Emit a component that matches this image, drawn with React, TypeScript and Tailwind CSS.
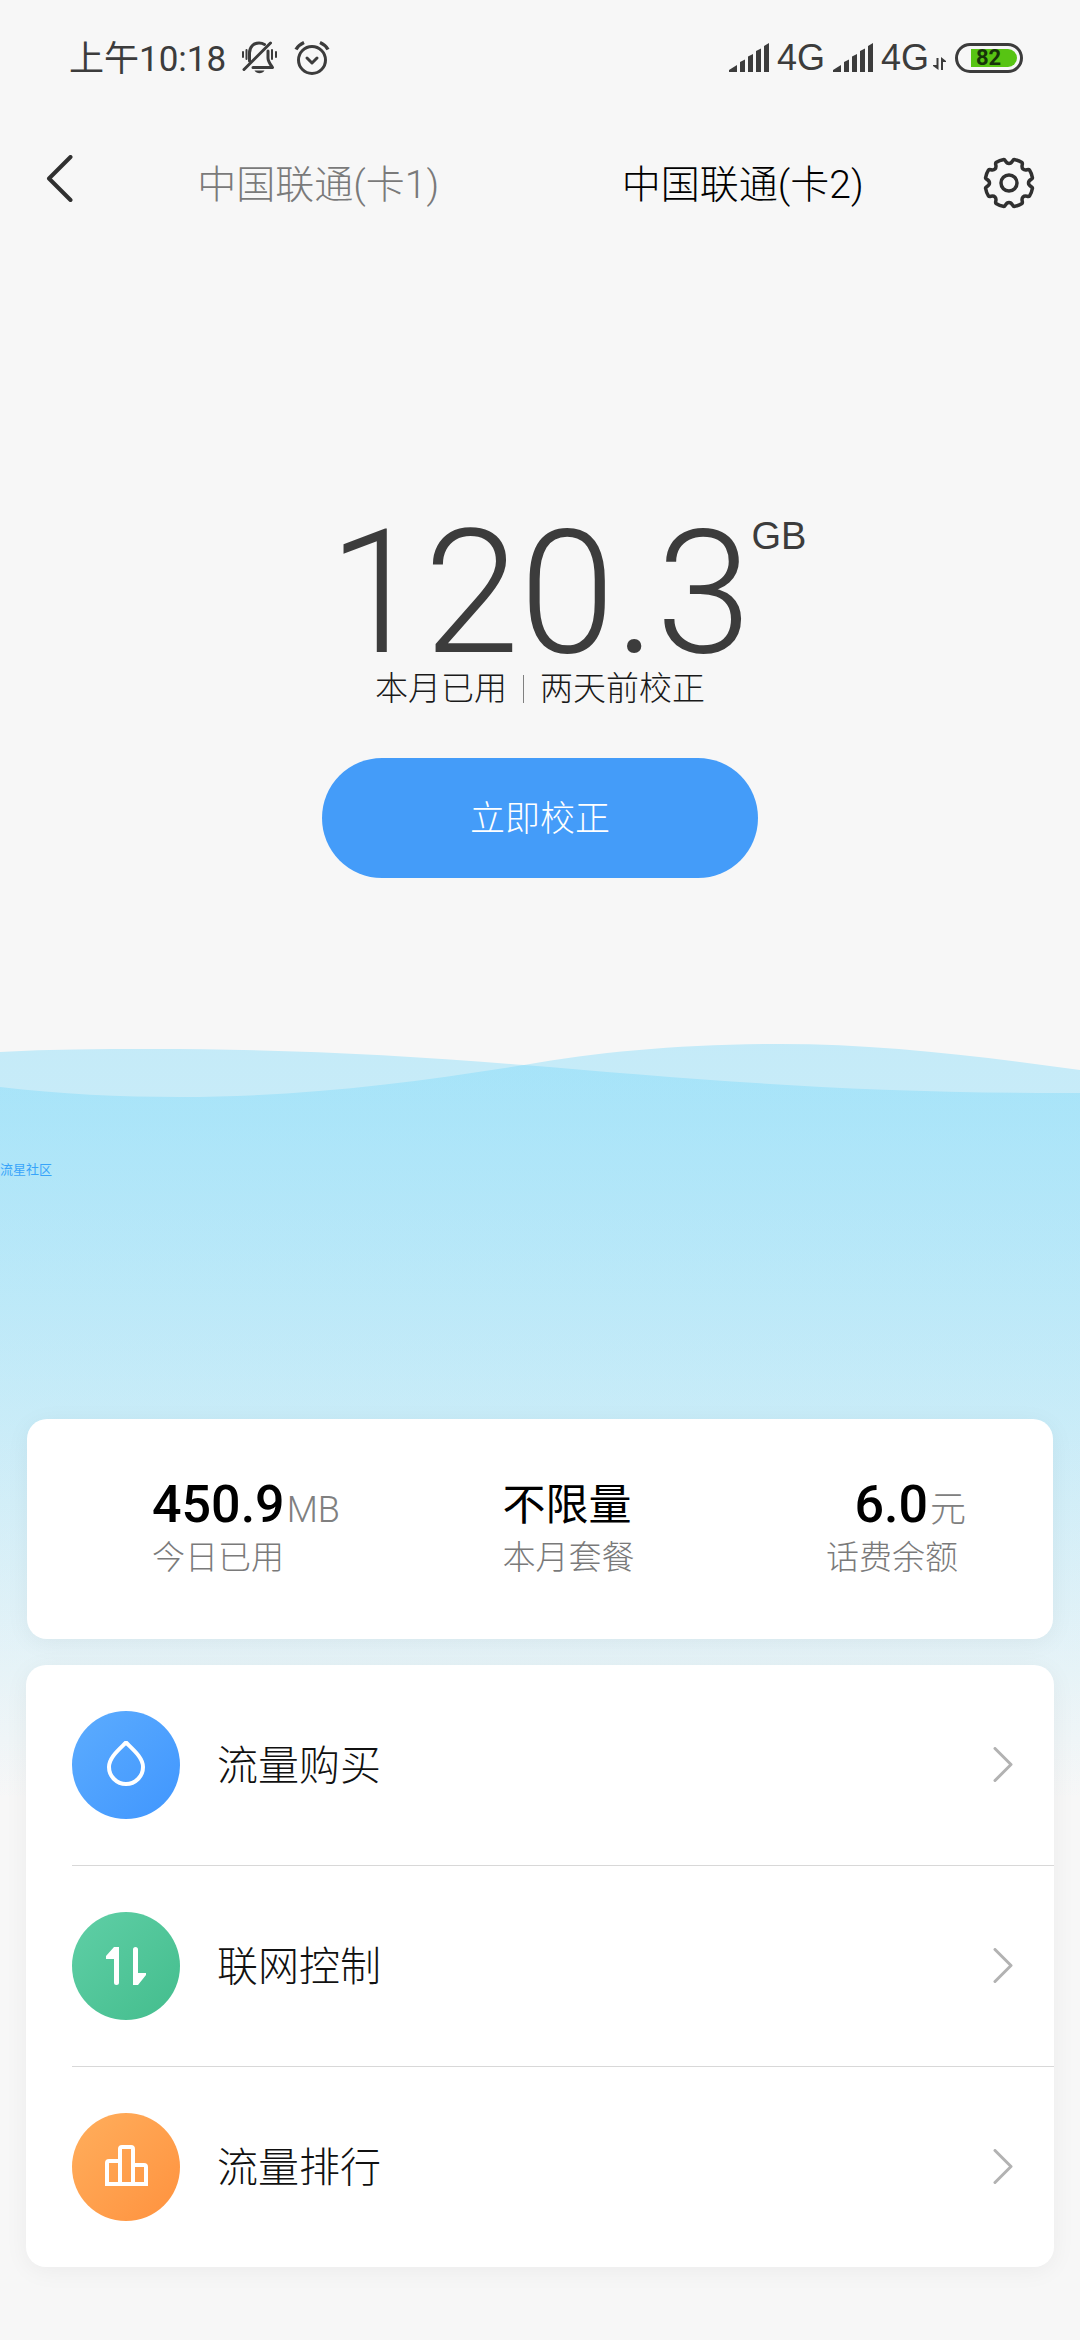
import React from 'react';

interface Stat {
    value: string;
    unit?: string;
    label: string;
}

interface MenuEntry {
    title: string;
    circle: string;
    icon: React.ReactNode;
}

const MutedBellIcon = () => (
    <svg width="36" height="34" viewBox="0 0 36 34" fill="none" stroke="#3c3c3c" strokeWidth="3" strokeLinecap="round">
        <path d="M7.500 20v-8C7.500 6 11.500 2 17 2c2.500 0 4 .5 5.500 1.500" />
        <path d="M26 10v7c0 3.500 2 6 4.500 9.500H11" strokeLinejoin="round" />
        <path d="M2 28.500 28.500 2" />
        <path d="M1 11v5M4.500 9v9M30 9v9M34 11v5" strokeWidth="2" />
        <path d="M12.500 29.500h10c-2 3.500-8 3.500-10 0z" fill="#3c3c3c" stroke="none" />
    </svg>
);

const AlarmIcon = () => (
    <svg width="36" height="36" viewBox="0 0 36 36" fill="none" stroke="#3c3c3c" strokeWidth="3" strokeLinecap="round" strokeLinejoin="round">
        <circle cx="18" cy="20" r="13.500" />
        <path d="m13 18 5 5 5-5" />
        <path d="M2 9.500C4 6 6.500 4 10 2.500M34 9.500C32 6 29.500 4 26 2.500" strokeLinecap="butt" strokeWidth="3.500" />
    </svg>
);

const SignalIcon = () => (
    <svg width="40" height="30" viewBox="0 0 40 30" fill="#3c3c3c">
        <path d="M0 29v-2l8-5v7zM11 29V19l5-2.500V29zM19 29V13.500l5-2.500v18zM27 29V8l5-2.500V29zM35 29V3l5-3v29z" />
    </svg>
);

const DataArrowsIcon = () => (
    <svg width="14" height="14" viewBox="0 0 14 14" fill="#3c3c3c">
        <path d="M3.500 1h2v12L0 9V8h3.500zM8 0l5 4v1h-3v8H8z" />
    </svg>
);

const GearIcon = () => (
    <svg width="52" height="52" viewBox="0 0 52 52" fill="none" stroke="#303030" strokeWidth="3.500" strokeLinejoin="round">
        <path d="M21 2.500c1.500 0 1.500 4 5 4s3.500-4 5-4c3 .5 6 1.700 8 3 1.500 1.500-1.500 4 1 6.500s5-.5 6.500 1c1.300 2 2.500 5 3 8 0 1.500-4 1.500-4 5s4 3.500 4 5c-.5 3-1.700 6-3 8-1.500 1.500-4-1.500-6.500 1s.5 5-1 6.500c-2 1.300-5 2.500-8 3-1.500 0-1.500-4-5-4s-3.500 4-5 4c-3-.5-6-1.700-8-3-1.500-1.500 1.500-4-1-6.500s-5 .5-6.500-1c-1.300-2-2.500-5-3-8 0-1.500 4-1.500 4-5s-4-3.500-4-5c.5-3 1.700-6 3-8 1.500-1.500 4 1.500 6.500-1s-.5-5 1-6.500c2-1.300 5-2.500 8-3z" />
        <circle cx="26" cy="26" r="8" />
    </svg>
);

const DropIcon = () => (
    <svg width="48" height="48" viewBox="0 0 48 48" fill="none" stroke="#fff" strokeWidth="4">
        <path d="M24 1.500C17 8.500 7 16.500 7 26a17 17 0 0 0 34 0C41 16.500 31 8.500 24 1.500z" />
    </svg>
);

const ArrowsIcon = () => (
    <svg width="48" height="48" viewBox="0 0 48 48" fill="#fff">
        <path d="M12 5h5v35.500a2.500 2.500 0 0 1-5 0V17H4v-3z" />
        <path d="M31 43V7.500a2.500 2.500 0 0 1 5 0V31h8v2l-8 10z" />
    </svg>
);

const RankIcon = () => (
    <svg width="48" height="48" viewBox="0 0 48 48" fill="none" stroke="#fff" strokeWidth="4">
        <path d="M18 41V6a2 2 0 0 1 2-2h9a2 2 0 0 1 2 2v35M18 18H7a2 2 0 0 0-2 2v21h39V24a2 2 0 0 0-2-2H31" />
    </svg>
);

const stats: Stat[] = [
    { value: '450.9', unit: 'MB', label: '今日已用' },
    { value: '不限量', label: '本月套餐' },
    { value: '6.0', unit: '元', label: '话费余额' }
];

const menu: MenuEntry[] = [
    { title: '流量购买', circle: 'from-[#5cacfe] to-[#4096fe]', icon: <DropIcon /> },
    { title: '联网控制', circle: 'from-[#5fcfa6] to-[#43bd8d]', icon: <ArrowsIcon /> },
    { title: '流量排行', circle: 'from-[#ffae5c] to-[#ff923e]', icon: <RankIcon /> }
];

const StatusBar = () => (
    <div className="flex h-[116px] items-center justify-between pr-[57px] pl-[69px] text-[#3c3c3c]">
        <div className="flex items-center">
            <span className="pt-1 text-[35px]">上午10:18</span>
            <div className="ml-4 flex items-center gap-4">
                <MutedBellIcon />
                <AlarmIcon />
            </div>
        </div>
        <div className="flex items-center font-['Liberation_Sans',sans-serif] text-[36px]">
            <SignalIcon />
            <span className="mx-2">4G</span>
            <SignalIcon />
            <span className="ml-2">4G</span>
            <span className="mt-3 ml-1"><DataArrowsIcon /></span>
            <div className="ml-2 flex h-[30px] w-[68px] items-center justify-end rounded-full border-3 border-[#3c3c3c] pr-[3px]">
                <div className="flex h-[18px] w-[46px] items-center rounded-l-xs rounded-r-full bg-[#57c413] pl-[5px] font-['Roboto',sans-serif] text-[22px] leading-[18px] font-bold text-[#17330a]">
                    82
                </div>
            </div>
        </div>
    </div>
);

const Header = () => (
    <header className="flex h-[134px] items-center px-[45px]">
        <button type="button" aria-label="返回" className="w-[61px]">
            <svg width="28" height="56" viewBox="0 0 28 56" fill="none" stroke="#303030" strokeWidth="4" strokeLinecap="round" strokeLinejoin="round">
                <path d="M25.500 2 4 23.500 25.500 45" />
            </svg>
        </button>
        <nav className="flex flex-1 pt-1 text-[39px] font-light">
            <button type="button" className="flex-1 text-[#7a7a7a]">中国联通(卡1)</button>
            <button type="button" className="flex-1 text-black">中国联通(卡2)</button>
        </nav>
        <button type="button" aria-label="设置" className="flex w-[80px] justify-end">
            <GearIcon />
        </button>
    </header>
);

const Usage = () => (
    <section className="flex flex-col items-center pt-[268px] pb-[166px]">
        <div className="grid w-full grid-cols-[1fr_auto_1fr] text-[#3c3c3c]">
            <span className="col-start-2 text-[172px] leading-[150px] font-light">120.3</span>
            <span className="font-['Liberation_Sans',sans-serif] text-[38px] leading-9">GB</span>
        </div>
        <div className="flex items-center text-[33px] leading-[42px] font-light text-[#1a1a1a]">
            <span>本月已用</span>
            <span className="mx-4 h-7 w-px bg-[#808080]" />
            <span>两天前校正</span>
        </div>
        <button type="button" className="mt-12 h-[120px] w-[436px] rounded-full bg-[#449cf9] pt-1 text-[35px] font-light text-white">
            立即校正
        </button>
    </section>
);

// Two translucent layers, the overlap gives the deeper blue
const Waves = () => (
    <svg className="absolute inset-x-0 top-0 h-[756px] w-full" viewBox="0 0 1080 756" preserveAspectRatio="none" aria-hidden="true">
        <defs>
            <linearGradient id="water" x1="0" y1="0" x2="0" y2="756" gradientUnits="userSpaceOnUse">
                <stop offset="0" stopColor="#73d7fa" stopOpacity="0.385" />
                <stop offset="1" stopColor="#73d7fa" stopOpacity="0" />
            </linearGradient>
        </defs>
        <path fill="url(#water)" d="M0 8C50 5 100 5 150 5C280 5 400 11 524 21C680 34 850 50 1080 49V756H0z" />
        <path fill="url(#water)" d="M0 43C60 50 120 53 180 53C300 53 410 39 524 21C600 8 680 0 780 0C880 0 980 12 1080 26V756H0z" />
    </svg>
);

const StatsCard = () => (
    <div className="mx-[27px] grid grid-cols-[13fr_12fr_auto] rounded-[20px] bg-white pt-[54px] pr-[87px] pb-[59px] pl-[125px] shadow-[0_4px_24px_rgba(0,0,0,0.05)]">
        {stats.map((stat) => (
            <div key={stat.label} className="group flex flex-col last:items-end">
                <div className="flex h-[62px] items-baseline">
                    {stat.unit ? (
                        <>
                            <span className="text-[52px] leading-[64px] font-medium">{stat.value}</span>
                            <span className="ml-0.5 text-[36px] font-light text-[#808080]">{stat.unit}</span>
                        </>
                    ) : (
                        <span className="text-[43px] leading-[64px]">{stat.value}</span>
                    )}
                </div>
                <span className="text-[33px] leading-[45px] font-light text-[#7a7a7a] group-last:pr-2">{stat.label}</span>
            </div>
        ))}
    </div>
);

const MenuCard = () => (
    <nav className="mx-[26px] mt-[26px] rounded-[20px] bg-white pl-[46px] shadow-[0_4px_24px_rgba(0,0,0,0.05)]">
        <ul className="divide-y divide-[#d8d8d8]">
            {menu.map((entry) => (
                <li key={entry.title}>
                    <button type="button" className="flex h-[200px] w-full items-center pr-10">
                        <span className={`flex size-[108px] items-center justify-center rounded-full bg-linear-135 ${entry.circle}`}>
                            {entry.icon}
                        </span>
                        <span className="ml-[37px] flex-1 pt-1 text-left text-[41px] font-light text-[#111]">{entry.title}</span>
                        <svg width="22" height="36" viewBox="0 0 22 36" fill="none" stroke="#b2b2b2" strokeWidth="3" strokeLinecap="round" strokeLinejoin="round">
                            <path d="m3 1.500 16 16-16 16" />
                        </svg>
                    </button>
                </li>
            ))}
        </ul>
    </nav>
);

export default function App() {
    return (
        <div className="min-h-screen bg-[#f7f7f7] font-['Roboto','Noto_Sans_CJK_SC',sans-serif] text-black">
            <StatusBar />
            <Header />
            <main>
                <Usage />
                <div className="relative">
                    <Waves />
                    <div className="relative pt-[116px] pb-[73px]">
                        <p className="mb-[239px] text-[13px] leading-5 text-[#38a4fa]">流星社区</p>
                        <StatsCard />
                        <MenuCard />
                    </div>
                </div>
            </main>
        </div>
    );
}
